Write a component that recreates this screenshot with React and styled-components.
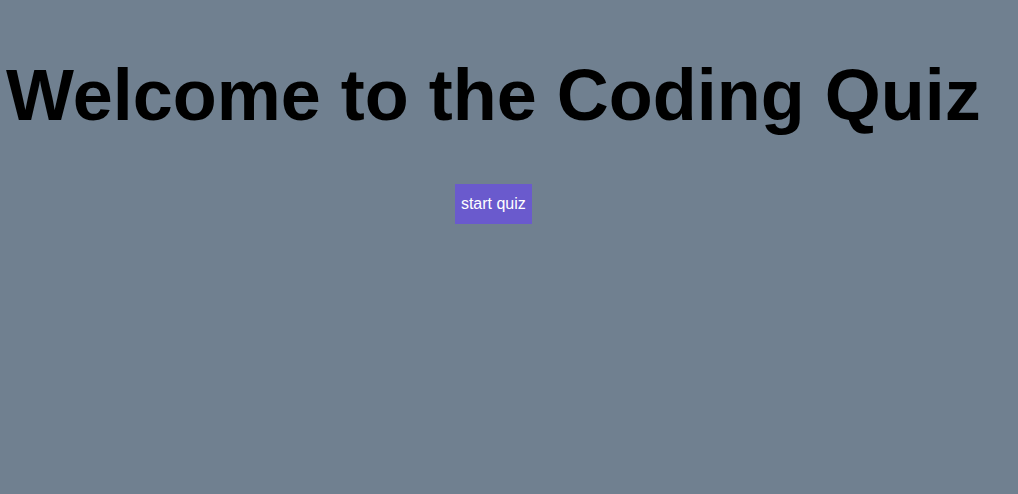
import styled, { createGlobalStyle } from "styled-components";

const GlobalStyle = createGlobalStyle`
    html, body {
        background-color: slategray;
    }
    body {
        margin: 6px;
        font-family: "Liberation Sans", Arial, sans-serif;
    }
`;

export default function App() {
    return (
        <>
            <GlobalStyle />
            <QuizContainer>
                <Title>Welcome to the Coding Quiz</Title>
                <StartButton>start quiz</StartButton>
            </QuizContainer>
        </>
    );
}

const QuizContainer = styled.div`
    display: inline-flex;
    flex-direction: column;
    align-items: center;
`;

const Title = styled.h1`
    font-size: 72px;
    font-weight: 700;
    color: #000;
    margin: 48px 0;
`;

const StartButton = styled.button`
    background-color: slateblue;
    color: #fff;
    border: none;
    padding: 11px 6px;
    font-family: inherit;
    font-size: 16px;
    cursor: pointer;
`;
